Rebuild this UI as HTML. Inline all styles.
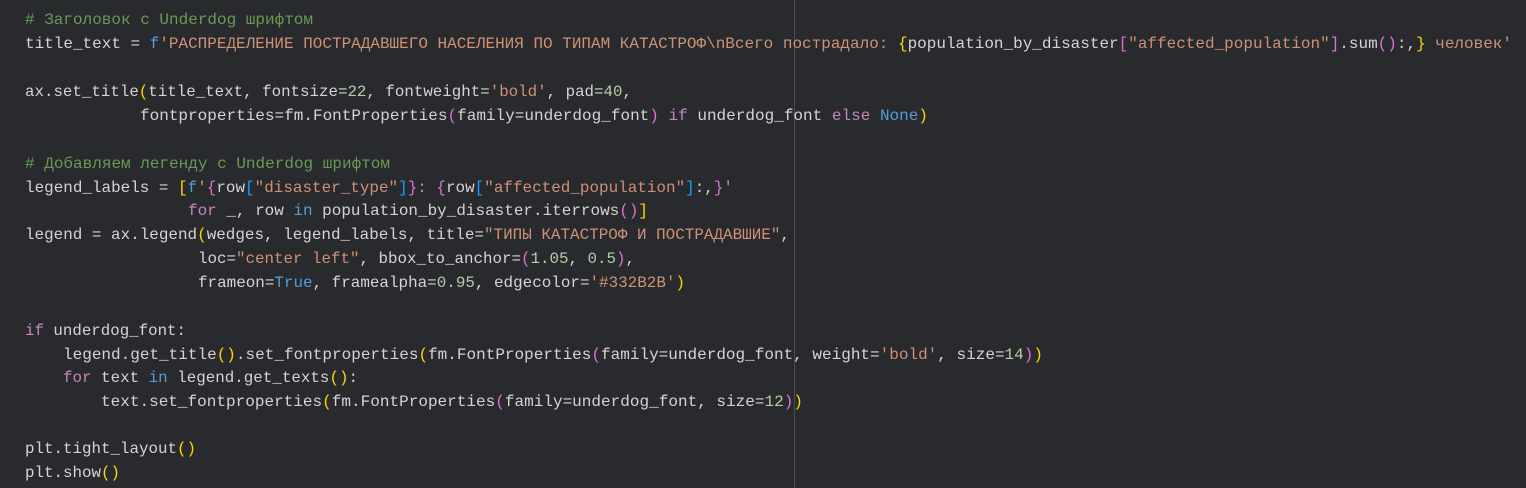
<!DOCTYPE html>
<html><head><meta charset="utf-8"><style>
html,body{margin:0;padding:0;background:#292a2d;width:1526px;height:488px;overflow:hidden}
svg{display:block}
text{font-family:"Liberation Mono","DejaVu Sans Mono",monospace;font-size:16px;fill:#d4d4d4;white-space:pre}
.c{fill:#6a9955}.s{fill:#ce9178}.k{fill:#569cd6}.n{fill:#b5cea8}.y{fill:#ffd700}.p{fill:#da70d6}.b{fill:#179fff}.m{fill:#c586c0}
</style></head><body>
<svg width="1526" height="488" xmlns="http://www.w3.org/2000/svg">
<rect x="794" y="0" width="1" height="488" fill="#4a4b4e"/>
<text x="25" y="24" textLength="288" lengthAdjust="spacingAndGlyphs" class="c"># Заголовок с Underdog шрифтом</text>
<text x="25" y="48" textLength="1487" lengthAdjust="spacingAndGlyphs">title_text = <tspan class="k">f</tspan><tspan class="s">'РАСПРЕДЕЛЕНИЕ ПОСТРАДАВШЕГО НАСЕЛЕНИЯ ПО ТИПАМ КАТАСТРОФ\nВсего пострадало: </tspan><tspan class="y">{</tspan>population_by_disaster<tspan class="p">[</tspan><tspan class="s">"affected_population"</tspan><tspan class="p">]</tspan>.sum<tspan class="p">()</tspan>:,<tspan class="y">}</tspan><tspan class="s"> человек'</tspan></text>
<text x="25" y="96" textLength="607" lengthAdjust="spacingAndGlyphs">ax.set_title<tspan class="y">(</tspan>title_text, fontsize=<tspan class="n">22</tspan>, fontweight=<tspan class="s">'bold'</tspan>, pad=<tspan class="n">40</tspan>,</text>
<text x="140" y="120" textLength="788" lengthAdjust="spacingAndGlyphs">fontproperties=fm.FontProperties<tspan class="p">(</tspan>family=underdog_font<tspan class="p">)</tspan> <tspan class="m">if</tspan> underdog_font <tspan class="m">else</tspan> <tspan class="k">None</tspan><tspan class="y">)</tspan></text>
<text x="25" y="168" textLength="365" lengthAdjust="spacingAndGlyphs" class="c"># Добавляем легенду с Underdog шрифтом</text>
<text x="25" y="192" textLength="708" lengthAdjust="spacingAndGlyphs">legend_labels = <tspan class="y">[</tspan><tspan class="k">f</tspan><tspan class="s">'</tspan><tspan class="p">{</tspan>row<tspan class="b">[</tspan><tspan class="s">"disaster_type"</tspan><tspan class="b">]</tspan><tspan class="p">}</tspan><tspan class="s">: </tspan><tspan class="p">{</tspan>row<tspan class="b">[</tspan><tspan class="s">"affected_population"</tspan><tspan class="b">]</tspan>:,<tspan class="p">}</tspan><tspan class="s">'</tspan></text>
<text x="188" y="215" textLength="460" lengthAdjust="spacingAndGlyphs"><tspan class="m">for</tspan> _, row <tspan class="k">in</tspan> population_by_disaster.iterrows<tspan class="p">()</tspan><tspan class="y">]</tspan></text>
<text x="25" y="239" textLength="765" lengthAdjust="spacingAndGlyphs">legend = ax.legend<tspan class="y">(</tspan>wedges, legend_labels, title=<tspan class="s">"ТИПЫ КАТАСТРОФ И ПОСТРАДАВШИЕ"</tspan>,</text>
<text x="198" y="263" textLength="437" lengthAdjust="spacingAndGlyphs">loc=<tspan class="s">"center left"</tspan>, bbox_to_anchor=<tspan class="p">(</tspan><tspan class="n">1.05</tspan>, <tspan class="n">0.5</tspan><tspan class="p">)</tspan>,</text>
<text x="198" y="287" textLength="487" lengthAdjust="spacingAndGlyphs">frameon=<tspan class="k">True</tspan>, framealpha=<tspan class="n">0.95</tspan>, edgecolor=<tspan class="s">'#332B2B'</tspan><tspan class="y">)</tspan></text>
<text x="25" y="335" textLength="161" lengthAdjust="spacingAndGlyphs"><tspan class="m">if</tspan> underdog_font:</text>
<text x="63" y="359" textLength="980" lengthAdjust="spacingAndGlyphs">legend.get_title<tspan class="y">()</tspan>.set_fontproperties<tspan class="y">(</tspan>fm.FontProperties<tspan class="p">(</tspan>family=underdog_font, weight=<tspan class="s">'bold'</tspan>, size=<tspan class="n">14</tspan><tspan class="p">)</tspan><tspan class="y">)</tspan></text>
<text x="63" y="382" textLength="295" lengthAdjust="spacingAndGlyphs"><tspan class="m">for</tspan> text <tspan class="k">in</tspan> legend.get_texts<tspan class="y">()</tspan>:</text>
<text x="101" y="406" textLength="702" lengthAdjust="spacingAndGlyphs">text.set_fontproperties<tspan class="y">(</tspan>fm.FontProperties<tspan class="p">(</tspan>family=underdog_font, size=<tspan class="n">12</tspan><tspan class="p">)</tspan><tspan class="y">)</tspan></text>
<text x="25" y="453" textLength="171" lengthAdjust="spacingAndGlyphs">plt.tight_layout<tspan class="y">()</tspan></text>
<text x="25" y="477" textLength="95" lengthAdjust="spacingAndGlyphs">plt.show<tspan class="y">()</tspan></text>
</svg>
</body></html>
